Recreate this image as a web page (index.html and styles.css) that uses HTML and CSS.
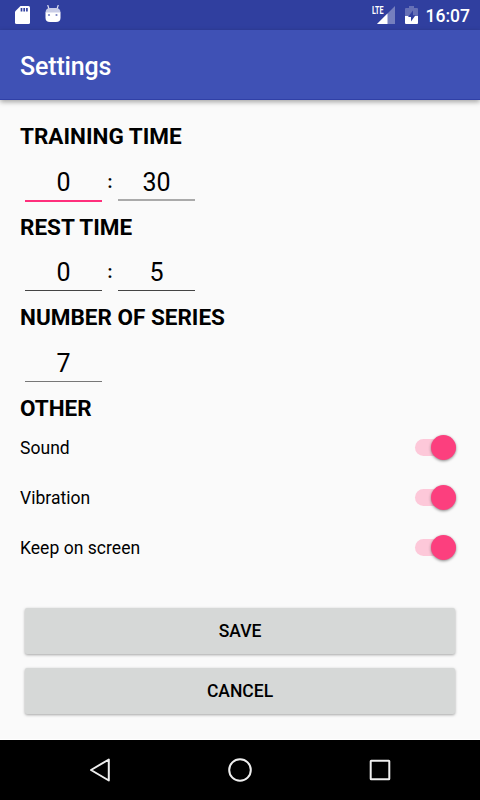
FILE: index.html
```html
<!DOCTYPE html>
<html lang="en">

<head>
	<meta charset="UTF-8">
	<title>Settings</title>
	<link rel="stylesheet" href="styles.css">
</head>

<body>
	<div class="status">
		<svg class="icon_sd" width="16" height="20" viewBox="0 0 16 20">
			<path d="M5.500 1H13.500Q15 1 15 2.500V17.500Q15 19 13.500 19H1.500Q0 19 0 17.500V6.500Z" fill="#fff" />
			<path d="M6.500 3V6.500M9.200 3V6.500M11.900 3V6.500" stroke="#303f9f" stroke-width="1.700" />
		</svg>
		<svg class="icon_debug" width="16" height="20" viewBox="0 0 16 20">
			<path d="M4 4L2.700 0M12 4L13.300 0" stroke="#dfe2f1" stroke-width="1.200" />
			<path d="M.5 8Q.5 3 5 3H11Q15.500 3 15.500 8Z" fill="#c9cde6" />
			<path d="M.5 7.500H15.500V13Q15.500 17 11 17H5Q.5 17 .5 13Z" fill="#fff" />
			<circle cx="4" cy="10" r="1.100" fill="#7983c1" />
			<circle cx="11.500" cy="10" r="1.100" fill="#7983c1" />
		</svg>
		<div class="signal">
			<svg width="18" height="18" viewBox="0 0 18 18">
				<path d="M18 0V18H0Z" fill="#757fbe" />
				<path d="M10.500 7.500V18H0Z" fill="#fff" />
				<path d="M0 0H7.500V9.500H0Z" fill="#303f9f" />
			</svg>
			<span class="lte">LTE</span>
		</div>
		<svg class="icon_battery" width="13" height="18" viewBox="0 0 13 18">
			<path d="M4 0H9V2H12Q13 2 13 3V10H0V3Q0 2 1 2H4Z" fill="#6670b6" />
			<path d="M0 10H13V17Q13 18 12 18H1Q0 18 0 17Z" fill="#fff" />
			<path d="M8 4.500L3 11H6V15.500L10.500 9.200H8Z" fill="#303f9f" />
		</svg>
		<span class="clock">16:07</span>
	</div>
	<div class="toolbar">Settings</div>

	<div class="container">
		<h2>TRAINING TIME</h2>
		<div class="time">
			<span class="field active">0</span>
			<span class="colon">:</span>
			<span class="field fading">30</span>
		</div>
		<h2>REST TIME</h2>
		<div class="time">
			<span class="field">0</span>
			<span class="colon">:</span>
			<span class="field">5</span>
		</div>
		<h2>NUMBER OF SERIES</h2>
		<div class="time">
			<span class="field thin">7</span>
		</div>
		<h2>OTHER</h2>
		<ul class="options">
			<li>Sound<span class="switch"><span class="thumb"></span></span></li>
			<li>Vibration<span class="switch"><span class="thumb"></span></span></li>
			<li>Keep on screen<span class="switch"><span class="thumb"></span></span></li>
		</ul>
		<div class="buttons">
			<button type="button">SAVE</button>
			<button type="button">CANCEL</button>
		</div>
	</div>

	<div class="nav">
		<svg width="24" height="24" viewBox="0 0 24 24">
			<path d="M20.800 1.500V22.500L3 12Z" />
		</svg>
		<svg width="24" height="24" viewBox="0 0 24 24">
			<circle cx="12" cy="12" r="10.800" />
		</svg>
		<svg width="24" height="24" viewBox="0 0 24 24">
			<rect x="2.700" y="2.700" width="18.600" height="18.600" rx=".5" />
		</svg>
	</div>
</body>

</html>
```

FILE: styles.css
```css
* {
	margin: 0;
	padding: 0;
	box-sizing: border-box;
}

body {
	width: 480px;
	height: 800px;
	overflow: hidden;
	display: flex;
	flex-direction: column;
	background: #fafafa;
	color: #000;
	font-family: Roboto, sans-serif;
}

.status {
	height: 30px;
	padding: 0 10px 0 15px;
	display: flex;
	align-items: center;
	background: #303f9f;
	color: #fff;
}

.icon_debug {
	margin-left: 14px;
}

.signal {
	position: relative;
	height: 18px;
	margin-left: auto;
}

.signal svg {
	display: block;
}

.lte {
	position: absolute;
	left: -5px;
	top: 0;
	font-size: 11px;
	font-weight: bold;
	line-height: 10px;
	transform: scaleX(0.65);
	transform-origin: left;
}

.icon_battery {
	margin-left: 10px;
}

.clock {
	margin-left: 8px;
	padding-top: 2px;
	font-size: 17.5px;
	font-weight: 500;
}

.toolbar {
	height: 70px;
	padding: 3px 20px 0;
	background: #3f51b5;
	border-bottom: 1px solid #3040a6;
	box-shadow: 0 2px 5px rgba(0, 0, 0, 0.35);
	color: #fff;
	font-size: 25px;
	font-weight: 500;
	line-height: 68px;
	letter-spacing: -0.15px;
}

.container {
	height: 640px;
	padding: 21px 20px 0;
	border-bottom: 1px solid #fff;
}

h2 {
	height: 30.6px;
	font-size: 22.5px;
	font-weight: bold;
	line-height: 31px;
}

.time {
	height: 60px;
	padding: 0 5px;
	display: flex;
}

.field {
	width: 77px;
	height: 49px;
	border-bottom: 1px solid #444;
	font-size: 25px;
	line-height: 62px;
	text-align: center;
}

.active {
	height: 50px;
	border-bottom: 2px solid #ff2f7c;
}

.fading {
	border-bottom: 2px solid #aaa;
}

.thin {
	border-bottom-color: #777;
}

.colon {
	width: 16px;
	font-size: 17.5px;
	font-weight: bold;
	line-height: 60px;
	text-align: center;
}

.options {
	list-style-type: none;
}

.options li {
	height: 50px;
	padding-right: 4px;
	display: flex;
	align-items: center;
	justify-content: space-between;
	font-size: 17.5px;
	letter-spacing: 0.04px;
}

.switch {
	width: 41px;
	height: 17px;
	margin-top: -1px;
	display: flex;
	align-items: center;
	justify-content: flex-end;
	border-radius: 9px;
	background: #fdc8d9;
}

.thumb {
	width: 25px;
	height: 25px;
	border-radius: 50%;
	background: #fc3f7e;
	box-shadow: 0 1px 3px rgba(0, 0, 0, 0.45);
}

.buttons {
	padding: 34.4px 5px 0;
	display: flex;
	flex-direction: column;
	gap: 14px;
}

.buttons button {
	height: 46px;
	padding-top: 1px;
	border: none;
	border-radius: 2px;
	background: #d6d8d7;
	box-shadow: 0 1px 3px rgba(0, 0, 0, 0.35);
	font-family: Roboto, sans-serif;
	font-size: 17.5px;
	font-weight: 500;
	color: #000;
}

.nav {
	height: 60px;
	padding: 0 88px;
	display: flex;
	align-items: center;
	justify-content: space-between;
	background: #000;
}

.nav svg {
	fill: none;
	stroke: #eee;
	stroke-width: 2;
	stroke-linejoin: round;
}
```
